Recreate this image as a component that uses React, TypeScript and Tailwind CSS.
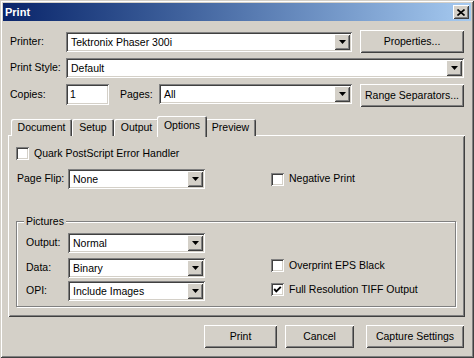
import React from "react";

const sunken =
  "shadow-[inset_1px_1px_0_#808080,inset_-1px_-1px_0_#ffffff,inset_2px_2px_0_#404040,inset_-2px_-2px_0_#d4d0c8]";
const raised =
  "shadow-[inset_1px_1px_0_#ffffff,inset_-1px_-1px_0_#404040,inset_2px_2px_0_#d4d0c8,inset_-2px_-2px_0_#808080]";

const ArrowButton: React.FC = () => (
  <div className={`w-[16px] h-[16px] bg-[#d4d0c8] flex items-center justify-center ${raised}`}>
    <svg width="7" height="4" viewBox="0 0 7 4">
      <polygon points="0,0 7,0 3.5,4" fill="#000" />
    </svg>
  </div>
);

const Select: React.FC<{ value: string; width: string }> = ({ value, width }) => (
  <div className={`${width} h-[20px] flex items-center bg-white p-[2px] ${sunken}`}>
    <span className="flex-1 pl-[3px] leading-[16px] whitespace-nowrap">{value}</span>
    <ArrowButton />
  </div>
);

const Button: React.FC<{ label: string; width: string; height?: string }> = ({
  label,
  width,
  height = "h-[23px]",
}) => (
  <button className={`${width} ${height} flex items-center justify-center bg-[#d4d0c8] ${raised}`}>
    {label}
  </button>
);

const Checkbox: React.FC<{ label: string; checked?: boolean; className?: string }> = ({
  label,
  checked,
  className = "",
}) => (
  <div className={`flex items-center gap-[5px] ${className}`}>
    <div className={`w-[13px] h-[13px] bg-white flex items-center justify-center ${sunken}`}>
      {checked && (
        <svg width="9" height="9" viewBox="0 0 9 9">
          <path d="M1.2 4 L3.3 6.3 L7.8 1.8" stroke="#000" strokeWidth="1.9" fill="none" />
        </svg>
      )}
    </div>
    <span className="whitespace-nowrap">{label}</span>
  </div>
);

const tabs = [
  { name: "Document", w: "w-[61px]" },
  { name: "Setup", w: "w-[42px]" },
  { name: "Output", w: "w-[45px]" },
  { name: "Options", w: "w-[50px]", active: true },
  { name: "Preview", w: "w-[51px]" },
];

export default function App() {
  return (
    <div
      className={`w-[474px] h-[358px] bg-[#d4d0c8] p-[3px] text-[10.5px] text-black font-['Liberation_Sans',Arial,sans-serif] shadow-[inset_1px_1px_0_#d4d0c8,inset_-1px_-1px_0_#404040,inset_2px_2px_0_#ffffff,inset_-2px_-2px_0_#808080]`}
    >
      {/* title bar */}
      <div className="h-[18px] flex items-center justify-between pl-[2px] pr-[2px] bg-gradient-to-r from-[#0a246a] to-[#a6caf0]">
        <span className="text-white font-bold text-[11px]">Print</span>
        <div className={`w-[16px] h-[14px] bg-[#d4d0c8] flex items-center justify-center ${raised}`}>
          <svg width="8" height="7" viewBox="0 0 8 7">
            <path d="M0.5 0.5 L7.5 6.5 M7.5 0.5 L0.5 6.5" stroke="#000" strokeWidth="1.6" />
          </svg>
        </div>
      </div>

      <div className="pl-[5px] pr-[6px] flex flex-col">
        {/* printer */}
        <div className="mt-[9px] h-[23px] flex items-center pl-[2px]">
          <span className="w-[56px]">Printer:</span>
          <Select value="Tektronix Phaser 300i" width="w-[286px]" />
          <div className="ml-[8px]">
            <Button label="Properties..." width="w-[104px]" />
          </div>
        </div>

        {/* print style */}
        <div className="mt-[5px] h-[20px] flex items-center pl-[2px]">
          <span className="w-[56px]">Print Style:</span>
          <Select value="Default" width="w-[398px]" />
        </div>

        {/* copies / pages */}
        <div className="mt-[6px] h-[23px] flex items-start pl-[2px]">
          <span className="w-[56px] leading-[21px]">Copies:</span>
          <div className={`w-[43px] h-[21px] bg-white pl-[4px] leading-[21px] ${sunken}`}>1</div>
          <span className="ml-[11px] w-[39px] leading-[21px]">Pages:</span>
          <Select value="All" width="w-[193px]" />
          <div className="ml-[8px]">
            <Button label="Range Separators..." width="w-[104px]" />
          </div>
        </div>

        {/* tabs */}
        <div className="mt-[9px] h-[20px] flex items-end pl-[3px] relative z-10">
          {tabs.map((t) =>
            t.active ? (
              <div
                key={t.name}
                className={`${t.w} -mx-[2px] h-[21px] -mb-[1px] bg-[#d4d0c8] rounded-t-[2px] flex items-center justify-center pb-[2px] relative shadow-[inset_1px_1px_0_#ffffff,inset_-1px_0_0_#404040,inset_-2px_0_0_#808080]`}
              >
                {t.name}
              </div>
            ) : (
              <div
                key={t.name}
                className={`${t.w} h-[17px] bg-[#d4d0c8] rounded-t-[2px] flex items-center justify-center shadow-[inset_1px_1px_0_#ffffff,inset_-1px_0_0_#404040,inset_-2px_0_0_#808080]`}
              >
                {t.name}
              </div>
            )
          )}
        </div>

        {/* panel */}
        <div className={`-mt-[1px] h-[182px] flex flex-col ${raised}`}>
          <Checkbox label="Quark PostScript Error Handler" className="mt-[12px] ml-[8px] h-[13px]" />

          <div className="mt-[9px] h-[20px] flex items-center pl-[9px]">
            <span className="w-[51px]">Page Flip:</span>
            <Select value="None" width="w-[137px]" />
            <Checkbox label="Negative Print" className="ml-[66px]" />
          </div>

          {/* pictures group */}
          <div className="mt-[32px] ml-[8px] w-[440px] h-[86px] relative border border-[#808080] shadow-[inset_1px_1px_0_#ffffff,1px_1px_0_#ffffff]">
            <span className="absolute left-[7px] -top-[8px] px-[2px] bg-[#d4d0c8] leading-[14px]">Pictures</span>
            <div className="mt-[11px] ml-[9px] grid grid-cols-[42px_137px_1fr] grid-rows-[20px_20px_20px] gap-y-[4px]">
              <span className="self-center">Output:</span>
              <Select value="Normal" width="w-[137px]" />
              <div />
              <span className="self-center mt-[1px]">Data:</span>
              <div className="mt-[1px]">
                <Select value="Binary" width="w-[137px]" />
              </div>
              <Checkbox label="Overprint EPS Black" className="ml-[66px] self-start mt-[1px]" />
              <span className="self-center">OPI:</span>
              <Select value="Include Images" width="w-[137px]" />
              <Checkbox label="Full Resolution TIFF Output" checked className="ml-[66px] self-start mt-[1px]" />
            </div>
          </div>
        </div>

        {/* bottom buttons */}
        <div className="mt-[8px] flex justify-end pr-[1px]">
          <Button label="Print" width="w-[73px]" />
          <div className="ml-[8px]">
            <Button label="Cancel" width="w-[69px]" />
          </div>
          <div className="ml-[12px]">
            <Button label="Capture Settings" width="w-[98px]" />
          </div>
        </div>
      </div>
    </div>
  );
}
